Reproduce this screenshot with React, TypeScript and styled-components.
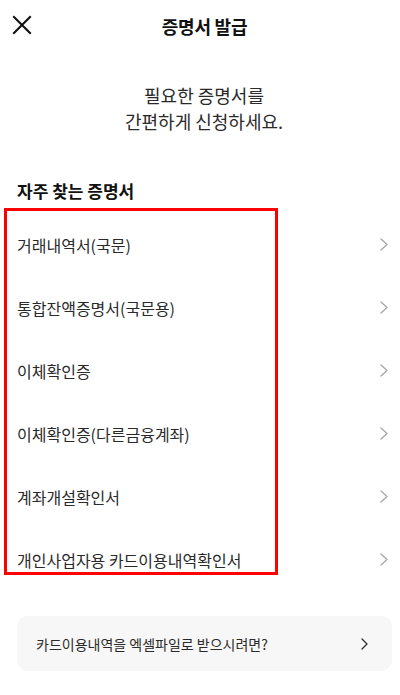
import React from "react"
import styled, { createGlobalStyle } from "styled-components"

const GlobalStyle = createGlobalStyle`
    html, body {
        margin: 0;
        padding: 0;
        background: #ffffff;
    }
    body {
        font-family: "Noto Sans CJK KR", "Noto Sans", sans-serif;
        color: #222222;
    }
`

const certificates = [
    "거래내역서(국문)",
    "통합잔액증명서(국문용)",
    "이체확인증",
    "이체확인증(다른금융계좌)",
    "계좌개설확인서",
    "개인사업자용 카드이용내역확인서"
]

const Page = styled.div`
    position: relative;
    width: 400px;
    min-height: 695px;
`

const Header = styled.header`
    position: relative;
    height: 52px;
    display: flex;
    align-items: center;
    justify-content: center;
`

const CloseButton = styled.button`
    position: absolute;
    left: 11px;
    top: 14px;
    width: 22px;
    height: 22px;
    padding: 0;
    border: none;
    background: none;
    display: flex;
    align-items: center;
    justify-content: center;
`

const Title = styled.h1`
    margin: 0 0 0 9px;
    font-size: 18px;
    font-weight: 700;
    color: #111111;
    letter-spacing: -0.2px;
`

const Intro = styled.p`
    margin: 30px 0 0 8px;
    text-align: center;
    font-size: 18px;
    line-height: 26px;
    color: #2a2a2a;
`

const SectionTitle = styled.h2`
    margin: 46px 0 0 17px;
    font-size: 17px;
    line-height: 22px;
    font-weight: 700;
    color: #111111;
`

const List = styled.ul`
    list-style: none;
    margin: 0;
    padding: 11px 0 0 0;
`

const Row = styled.li`
    height: 63px;
    display: flex;
    align-items: center;
    justify-content: space-between;
    padding: 0 12px 0 17px;
    font-size: 16px;
    color: #2a2a2a;
`

const Card = styled.div`
    margin: 25px 8px 0 17px;
    height: 55px;
    border-radius: 11px;
    background: #f7f7f7;
    display: flex;
    align-items: center;
    justify-content: space-between;
    padding: 0 24px 0 19px;
    font-size: 14px;
    color: #2a2a2a;
`

const Highlight = styled.div`
    position: absolute;
    left: 4px;
    top: 208px;
    width: 274px;
    height: 367px;
    box-sizing: border-box;
    border: 3px solid #ff0000;
    pointer-events: none;
`

const Chevron: React.FC<{ color: string; width: number; height: number }> = ({ color, width, height }) => (
    <svg width={width} height={height} viewBox={`0 0 ${width} ${height}`} fill="none">
        <path
            d={`M1 1 L${width - 1} ${height / 2} L1 ${height - 1}`}
            stroke={color}
            strokeWidth="1.4"
            strokeLinecap="round"
            strokeLinejoin="round"
        />
    </svg>
)

export default function App() {
    return (
        <Page>
            <GlobalStyle />
            <Header>
                <CloseButton aria-label="닫기">
                    <svg width="20" height="20" viewBox="0 0 20 20">
                        <path d="M2 2 L18 18 M18 2 L2 18" stroke="#111" strokeWidth="2.1" strokeLinecap="square" />
                    </svg>
                </CloseButton>
                <Title>증명서 발급</Title>
            </Header>
            <Intro>
                필요한 증명서를
                <br />
                간편하게 신청하세요.
            </Intro>
            <SectionTitle>자주 찾는 증명서</SectionTitle>
            <List>
                {certificates.map(name => (
                    <Row key={name}>
                        {name}
                        <Chevron color="#a8a8a8" width={8} height={13} />
                    </Row>
                ))}
            </List>
            <Card>
                카드이용내역을 엑셀파일로 받으시려면?
                <Chevron color="#333333" width={7} height={12} />
            </Card>
            <Highlight />
        </Page>
    )
}
